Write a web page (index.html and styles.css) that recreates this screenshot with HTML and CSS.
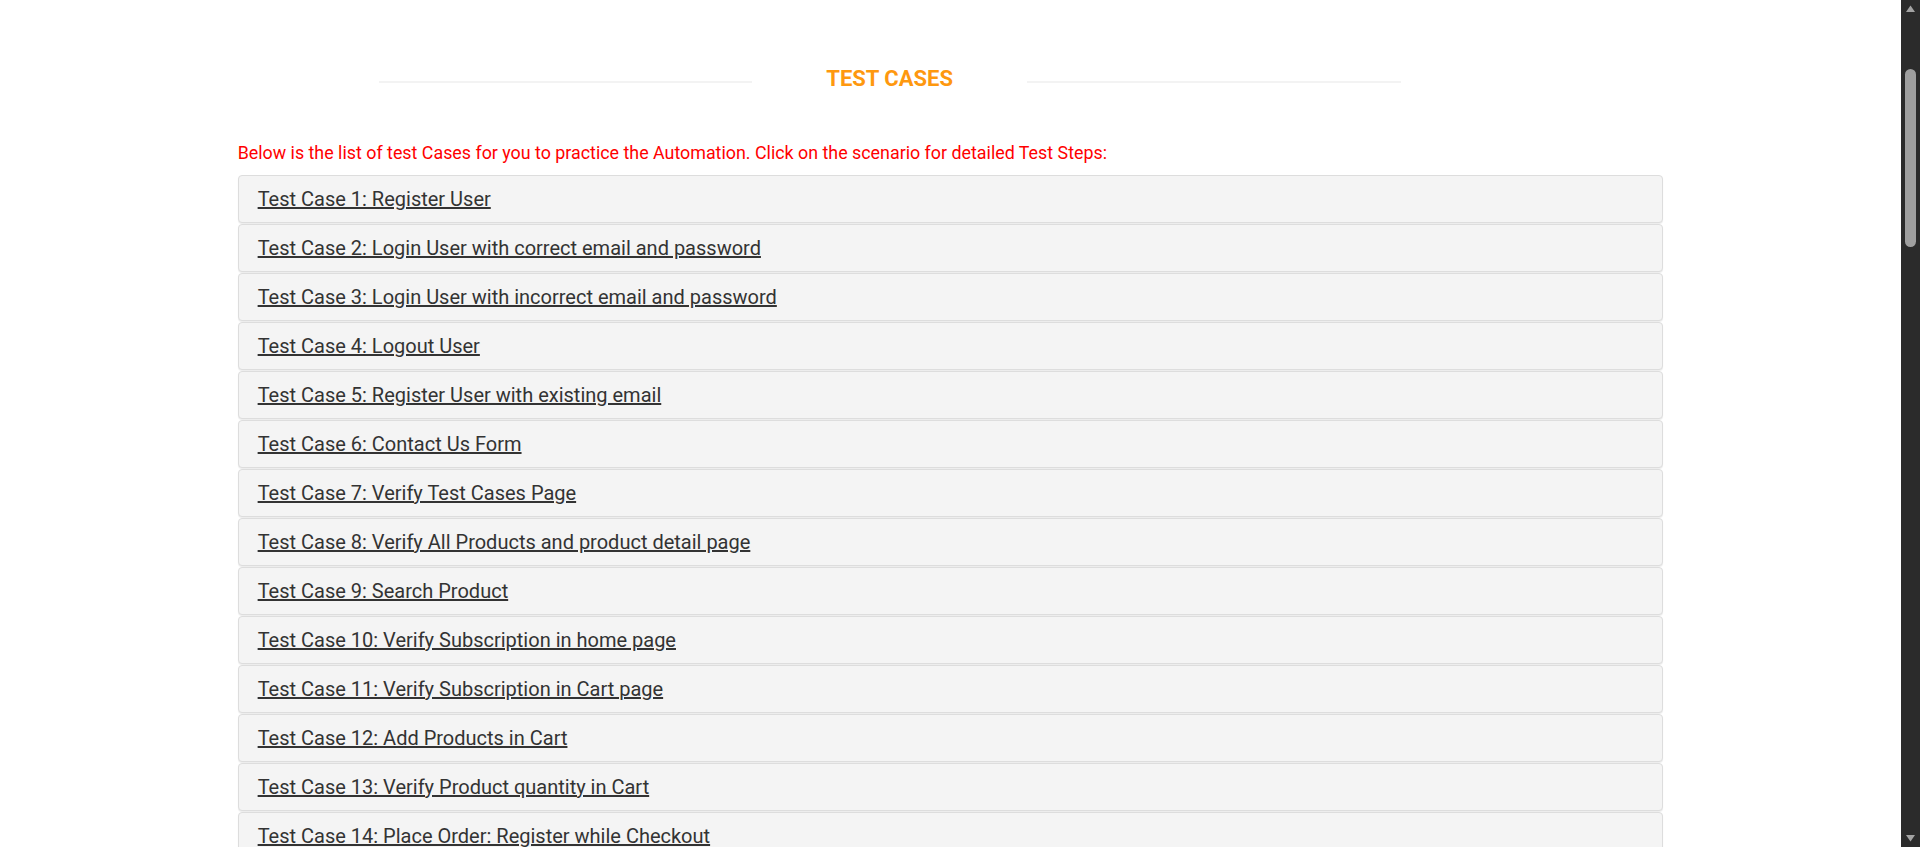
FILE: index.html
```html
<!DOCTYPE html>
<html lang="en">
<head>
<meta charset="utf-8">
<title>Automation Practice Website for UI Testing - Test Cases</title>
<link rel="stylesheet" href="styles.css">
</head>
<body>
<section class="page">
  <div class="container">
    <div class="title-row">
      <span class="title-line"></span>
      <h2 class="title">Test Cases</h2>
      <span class="title-line"></span>
    </div>
    <p class="intro">Below is the list of test Cases for you to practice the Automation. Click on the scenario for detailed Test Steps:</p>
    <div class="cases">
      <div class="panel"><h4 class="panel-title"><a href="#">Test Case 1: Register User</a></h4></div>
      <div class="panel"><h4 class="panel-title"><a href="#">Test Case 2: Login User with correct email and password</a></h4></div>
      <div class="panel"><h4 class="panel-title"><a href="#">Test Case 3: Login User with incorrect email and password</a></h4></div>
      <div class="panel"><h4 class="panel-title"><a href="#">Test Case 4: Logout User</a></h4></div>
      <div class="panel"><h4 class="panel-title"><a href="#">Test Case 5: Register User with existing email</a></h4></div>
      <div class="panel"><h4 class="panel-title"><a href="#">Test Case 6: Contact Us Form</a></h4></div>
      <div class="panel"><h4 class="panel-title"><a href="#">Test Case 7: Verify Test Cases Page</a></h4></div>
      <div class="panel"><h4 class="panel-title"><a href="#">Test Case 8: Verify All Products and product detail page</a></h4></div>
      <div class="panel"><h4 class="panel-title"><a href="#">Test Case 9: Search Product</a></h4></div>
      <div class="panel"><h4 class="panel-title"><a href="#">Test Case 10: Verify Subscription in home page</a></h4></div>
      <div class="panel"><h4 class="panel-title"><a href="#">Test Case 11: Verify Subscription in Cart page</a></h4></div>
      <div class="panel"><h4 class="panel-title"><a href="#">Test Case 12: Add Products in Cart</a></h4></div>
      <div class="panel"><h4 class="panel-title"><a href="#">Test Case 13: Verify Product quantity in Cart</a></h4></div>
      <div class="panel"><h4 class="panel-title"><a href="#">Test Case 14: Place Order: Register while Checkout</a></h4></div>
      <div class="panel"><h4 class="panel-title"><a href="#">Test Case 15: Place Order: Register before Checkout</a></h4></div>
      <div class="panel"><h4 class="panel-title"><a href="#">Test Case 16: Place Order: Login before Checkout</a></h4></div>
      <div class="panel"><h4 class="panel-title"><a href="#">Test Case 17: Remove Products From Cart</a></h4></div>
      <div class="panel"><h4 class="panel-title"><a href="#">Test Case 18: View Category Products</a></h4></div>
      <div class="panel"><h4 class="panel-title"><a href="#">Test Case 19: View &amp; Cart Brand Products</a></h4></div>
      <div class="panel"><h4 class="panel-title"><a href="#">Test Case 20: Search Products and Verify Cart After Login</a></h4></div>
      <div class="panel"><h4 class="panel-title"><a href="#">Test Case 21: Add review on product</a></h4></div>
      <div class="panel"><h4 class="panel-title"><a href="#">Test Case 22: Add to cart from Recommended items</a></h4></div>
      <div class="panel"><h4 class="panel-title"><a href="#">Test Case 23: Verify address details in checkout page</a></h4></div>
      <div class="panel"><h4 class="panel-title"><a href="#">Test Case 24: Download Invoice after purchase order</a></h4></div>
      <div class="panel"><h4 class="panel-title"><a href="#">Test Case 25: Verify Scroll Up using 'Arrow' button and Scroll Down functionality</a></h4></div>
      <div class="panel"><h4 class="panel-title"><a href="#">Test Case 26: Verify Scroll Up without 'Arrow' button and Scroll Down functionality</a></h4></div>
    </div>
  </div>
</section>
<div class="scrollbar" aria-hidden="true">
  <svg class="sb-arrow" width="19" height="17" viewBox="0 0 19 17"><path d="M5 12 L9.5 5.5 L14 12 Z" fill="#a3a3a3"/></svg>
  <div class="sb-thumb"></div>
  <svg class="sb-arrow sb-down" width="19" height="17" viewBox="0 0 19 17"><path d="M5 5 L9.5 11.5 L14 5 Z" fill="#a3a3a3"/></svg>
</div>
</body>
</html>
```
FILE: styles.css
```css
html, body {
  margin: 0;
  padding: 0;
  background: #ffffff;
}
body {
  font-family: Roboto, "Liberation Sans", Arial, sans-serif;
  color: #696763;
}
.page {
  margin-right: 19px;
  padding: 67px 0 2400px;
}
.container {
  width: 75%;
  margin: 0 auto;
}
.title-row {
  display: flex;
  align-items: center;
  width: 1022px;
  margin-left: 141px;
  height: 24px;
}
.title-line {
  flex: 1;
  height: 2px;
  background: #f3f3f3;
  margin-top: 6px;
}
.title {
  margin: 0 74px;
  font-size: 22px;
  line-height: 24px;
  font-weight: 700;
  color: #fe980f;
  text-transform: uppercase;
  white-space: nowrap;
}
.intro {
  margin: 52px 0 0;
  font-size: 17.85px;
  line-height: 20px;
  color: #ff0000;
}
.cases {
  margin-top: 12px;
  display: flex;
  flex-direction: column;
  gap: 1px;
}
.panel {
  background: #f4f4f4;
  border: 1px solid #dddddd;
  border-radius: 4px;
  box-shadow: 0 1px 1px rgba(0, 0, 0, 0.08);
  padding: 12px 19px 12px;
}
.panel-title {
  margin: 0;
  font-size: 20px;
  line-height: 22px;
  font-weight: 400;
}
.panel-title a {
  color: #333333;
  text-decoration: underline;
}
.scrollbar {
  position: fixed;
  top: 0;
  right: 0;
  width: 19px;
  height: 100vh;
  background: #2b2b2b;
  display: flex;
  flex-direction: column;
  align-items: center;
}
.sb-arrow {
  display: block;
  flex: none;
}
.sb-thumb {
  width: 11px;
  height: 178px;
  margin-top: 52px;
  border-radius: 6px;
  background: #9f9f9f;
}
.sb-down {
  margin-top: auto;
}
```
